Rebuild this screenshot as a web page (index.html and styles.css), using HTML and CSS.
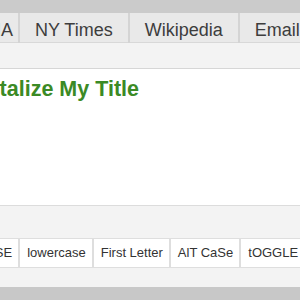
FILE: index.html
```html
<!DOCTYPE html>
<html>
<head>
<meta charset="utf-8">
<link rel="stylesheet" href="styles.css">
</head>
<body>
<div class="page">
  <div class="topbar"></div>
  <nav class="tabs">
    <div class="tab tab-first">AMA</div>
    <div class="tab">NY Times</div>
    <div class="tab">Wikipedia</div>
    <div class="tab">Email</div>
  </nav>
  <div class="subbar"></div>
  <main class="editor">
    <h1 class="title">Capitalize My Title</h1>
  </main>
  <div class="toolbar"></div>
  <div class="buttons">
    <button class="btn">UPPERCASE</button>
    <button class="btn">lowercase</button>
    <button class="btn">First Letter</button>
    <button class="btn">AlT CaSe</button>
    <button class="btn">tOGGLE caSE</button>
  </div>
  <div class="footband"></div>
  <div class="bottombar"></div>
</div>
</body>
</html>
```
FILE: styles.css
```css
html, body {
  margin: 0;
  padding: 0;
  width: 300px;
  height: 300px;
  overflow: hidden;
  background: #ffffff;
  font-family: "Liberation Sans", Arial, Helvetica, sans-serif;
}
.page {
  width: 300px;
  height: 300px;
  display: flex;
  flex-direction: column;
  overflow: hidden;
}
.topbar {
  height: 13px;
  background: #cbcbcb;
  flex: none;
}
.tabs {
  display: flex;
  flex: none;
  height: 30px;
  background: #d4d4d4;
  margin-left: -41px;
  gap: 2px;
  white-space: nowrap;
}
.tab {
  flex: none;
  height: 30px;
  box-sizing: border-box;
  padding: 4px 15px 0;
  line-height: 26px;
  font-size: 18px;
  color: #3d3d3d;
  background: #e9e9e9;
  border-bottom: 1px solid #d8d8d8;
}
.tab-first {
  padding-right: 5px;
}
.subbar {
  flex: none;
  height: 25px;
  background: #f3f3f3;
  border-bottom: 1px solid #d6d6d6;
}
.editor {
  flex: none;
  height: 136px;
  background: #ffffff;
  padding-top: 8px;
  box-sizing: border-box;
}
.title {
  margin: 0 0 0 -47px;
  font-size: 21.5px;
  line-height: 24px;
  font-weight: bold;
  color: #3b8a25;
  white-space: nowrap;
}
.toolbar {
  flex: none;
  height: 32px;
  background: #f3f3f3;
  border-top: 1px solid #dcdcdc;
}
.buttons {
  flex: none;
  display: flex;
  height: 30px;
  margin-left: -75px;
  background: #f3f3f3;
  white-space: nowrap;
}
.btn {
  flex: none;
  height: 30px;
  margin: 0;
  padding: 0 6px 0 7px;
  border: 1px solid #dedede;
  border-left-width: 0;
  border-right: 2px solid #dedede;
  background: #ffffff;
  font-family: "Liberation Sans", Arial, Helvetica, sans-serif;
  font-size: 13px;
  line-height: 28px;
  color: #333333;
}
.footband {
  flex: none;
  height: 19px;
  background: #f3f3f3;
}
.bottombar {
  flex: 1;
  background: #c8c8c8;
}
```
